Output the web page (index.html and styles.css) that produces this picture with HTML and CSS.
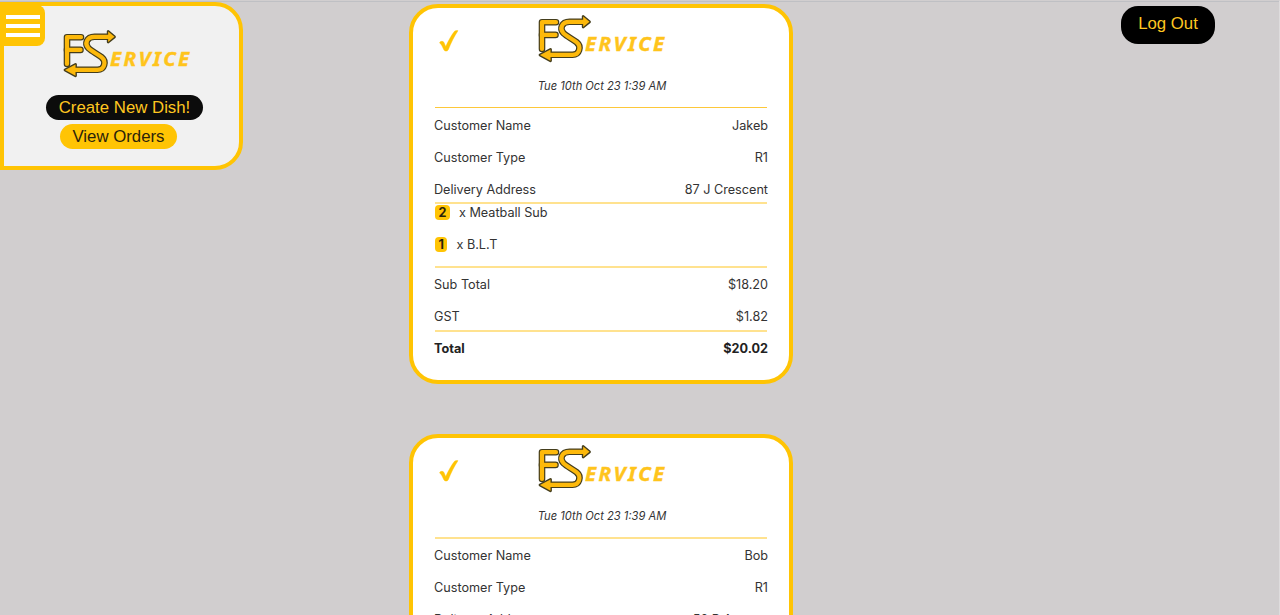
FILE: index.html
```html
<!DOCTYPE html>
<html lang="en">
<head>
<meta charset="utf-8">
<title>FS Service</title>
<link rel="stylesheet" href="styles.css">
</head>
<body>
<svg class="defs" width="0" height="0">
  <defs>
    <g id="mark-lines">
      <path d="M18 8.200H4V35"/>
      <path d="M4 20.900H17.500"/>
      <path d="M46 7.800H31.500C23.500 7.800 21.300 15 25.500 19.200C29 22.500 34.500 25 38.500 28.200C43.800 32.500 41.500 40.800 34.500 40.800H12"/>
    </g>
    <g id="mark-heads">
      <path d="M45.200 2.500V13L51.500 7.800Z"/>
      <path d="M12.500 35.500V46.800L2 41Z"/>
    </g>
    <symbol id="logo" viewBox="0 0 130 50">
      <use href="#mark-lines" class="edge"/>
      <use href="#mark-heads" class="edge-head"/>
      <use href="#mark-lines" class="core"/>
      <use href="#mark-heads" class="core-head"/>
      <text class="wordmark" x="47" y="36.600" textLength="81.500" lengthAdjust="spacingAndGlyphs">ERVICE</text>
    </symbol>
    <symbol id="tick" viewBox="0 0 20 22">
      <path d="M.5 12.800C1.600 10.700 4.200 11 5.100 12.700L6.700 16.500C9.500 10.500 12.500 5 15.500 1.300C16.500.3 18 .2 19 .7C15.500 6 12 12.800 9.400 19.500C8.600 21.500 5.800 21.700 4.800 19.800C3.500 16.800 2.600 14.500.5 12.800Z"/>
    </symbol>
  </defs>
</svg>
<div class="page">
  <aside class="sidebar">
    <button class="menu" aria-label="Menu"><span></span><span></span><span></span></button>
    <svg class="logo"><use href="#logo"/></svg>
    <a class="pill pill-dark">Create New Dish!</a>
    <a class="pill pill-gold">View Orders</a>
  </aside>
  <main class="orders">
    <article class="card">
      <header class="head">
        <svg class="tick"><use href="#tick"/></svg>
        <svg class="logo"><use href="#logo"/></svg>
      </header>
      <p class="date">Tue 10th Oct 23 1:39 AM</p>
      <section class="group customer">
        <div class="row"><span>Customer Name</span><span>Jakeb</span></div>
        <div class="row"><span>Customer Type</span><span>R1</span></div>
        <div class="row"><span>Delivery Address</span><span>87 J Crescent</span></div>
      </section>
      <section class="group items">
        <div class="item"><b class="qty">2</b><span>x Meatball Sub</span></div>
        <div class="item"><b class="qty">1</b><span>x B.L.T</span></div>
      </section>
      <section class="group sums">
        <div class="row"><span>Sub Total</span><span>$18.20</span></div>
        <div class="row"><span>GST</span><span>$1.82</span></div>
      </section>
      <section class="group total">
        <div class="row"><span>Total</span><span>$20.02</span></div>
      </section>
    </article>
    <article class="card">
      <header class="head">
        <svg class="tick"><use href="#tick"/></svg>
        <svg class="logo"><use href="#logo"/></svg>
      </header>
      <p class="date">Tue 10th Oct 23 1:39 AM</p>
      <section class="group customer">
        <div class="row"><span>Customer Name</span><span>Bob</span></div>
        <div class="row"><span>Customer Type</span><span>R1</span></div>
        <div class="row"><span>Delivery Address</span><span>56 B Avenue</span></div>
      </section>
    </article>
  </main>
  <a class="logout">Log Out</a>
</div>
</body>
</html>
```
FILE: styles.css
```css
* { box-sizing: border-box; }
body { margin: 0; background: #d1cecf; overflow: hidden; }
.defs { position: absolute; }
.page {
  display: grid;
  grid-template-columns: 409px 384px 1fr;
  align-items: start;
  height: 615px;
  overflow: hidden;
  border-top: 1px solid #d1cecf;
  border-right: 1px solid #dedcdd;
  box-shadow: inset 0 1px #bfc0c4;
}

.sidebar {
  position: relative;
  display: flex;
  flex-direction: column;
  align-items: center;
  width: 243px;
  height: 168px;
  margin-top: 1px;
  padding: 23px 0 0 12px;
  border: 4px solid #ffc404;
  border-radius: 0 28px 28px 0;
  background: #f1f1f1;
}
.menu {
  position: absolute;
  left: -4px;
  top: -1px;
  display: flex;
  flex-direction: column;
  gap: 5px;
  width: 45px;
  height: 41px;
  padding: 10px 5px 0 6px;
  border: 0;
  border-radius: 0 8px 8px 0;
  background: #ffc404;
}
.menu span { height: 4px; background: #fff; }
.logo { display: block; width: 130px; height: 50px; flex: none; }
.edge { fill: none; stroke: #443d1c; stroke-width: 6.6; stroke-linecap: round; stroke-linejoin: round; }
.edge-head { fill: #443d1c; stroke: #443d1c; stroke-width: 2.8; stroke-linejoin: round; }
.core { fill: none; stroke: #fdb90b; stroke-width: 4.200; stroke-linecap: round; stroke-linejoin: round; }
.core-head { fill: #fdb90b; }
.wordmark {
  fill: #ffc41c;
  stroke: #ffc41c;
  stroke-width: .4px;
  letter-spacing: 2.2px;
  font: italic 700 19px "Noto Sans", "Open Sans", sans-serif;
}

.pill {
  display: flex;
  align-items: center;
  justify-content: center;
  height: 25px;
  border-radius: 13px;
  font: 16.800px "Liberation Sans", Arial, sans-serif;
}
.pill-dark { width: 157px; margin: 16px 6px 0 0; background: #0c0c0c; color: #ffc720; }
.pill-gold { width: 117px; margin: 4px 18px 0 0; background: #ffc404; color: #2b230a; }

.card {
  height: 380px;
  margin: 3px 0 50px;
  padding: 6px 21px 0;
  border: 4px solid #ffc404;
  border-radius: 29px;
  background: #fff;
  color: #333;
  font: 12.650px/16px Inter, sans-serif;
}
.card + .card { margin-top: 0; }
.head { display: flex; }
.tick { width: 20px; height: 22px; margin: 16px 79px 0 5px; fill: #ffc404; stroke: #ffc404; stroke-width: .4px; }
.date {
  margin: 14px 0 13px 2px;
  text-align: center;
  font-style: italic;
  font-size: 11.150px;
}
.group { border-top: 2px solid #ffe28f; margin: 0 1px; }
.row { display: flex; justify-content: space-between; margin: 0 -1px; height: 32px; padding-top: 9px; }
.customer { height: 95px; }
.card:first-child .customer { border-top: 1px solid #fdc83a; padding-top: 1px; }
.items { height: 64px; }
.item { display: flex; align-items: center; height: 32px; padding-bottom: 15px; }
.qty {
  height: 15px;
  margin-right: 9px;
  padding: 0 3.500px;
  border-radius: 4px;
  background: #ffc404;
  color: #2b230a;
  line-height: 15px;
}
.sums { height: 64px; }
.total { font-weight: 700; color: #222; }

.logout {
  display: flex;
  justify-content: center;
  width: 94px;
  height: 38px;
  margin: 5px 0 0 328px;
  padding-top: 8px;
  border-radius: 17px;
  background: #000;
  color: #ffc720;
  font: 16.800px/20px "Liberation Sans", Arial, sans-serif;
}
```
